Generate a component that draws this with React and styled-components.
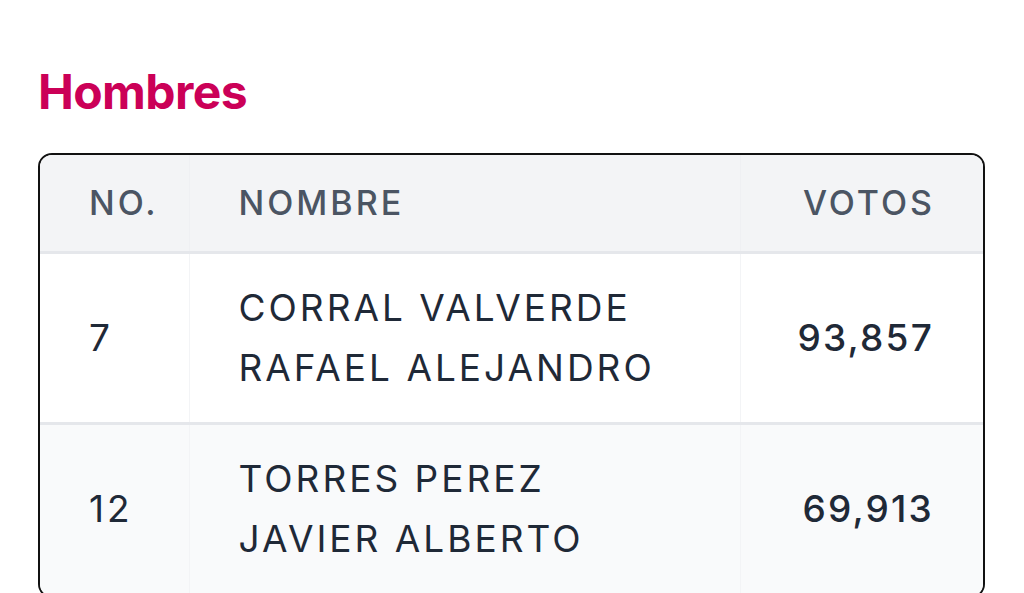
import React from "react";
import styled, { createGlobalStyle } from "styled-components";

const GlobalStyle = createGlobalStyle`
  html, body {
    margin: 0;
    padding: 0;
    background: #ffffff;
  }
  body {
    font-family: Inter, "Noto Sans", "Liberation Sans", sans-serif;
    color: #1f2937;
  }
`;

const Page = styled.div`
  padding: 63px 39px 0 38px;
`;

const Title = styled.h2`
  margin: 0 0 32px;
  font-size: 48px;
  line-height: 58px;
  font-weight: 700;
  color: #cb0057;
  letter-spacing: -0.6px;
`;

const TableWrap = styled.div`
  border: 2px solid #111111;
  border-radius: 14px;
  overflow: hidden;
`;

const Table = styled.table`
  width: 100%;
  border-collapse: collapse;
  table-layout: fixed;
`;

const Col = styled.col`
  width: ${(p) => p.w || "auto"};
`;

const HeadCell = styled.th`
  box-sizing: border-box;
  height: 97px;
  padding: 0 50px 0 49px;
  background: #f3f4f6;
  border-bottom: 3px solid #e5e7eb;
  border-right: 1px solid #eff0f3;
  font-size: 34px;
  font-weight: 500;
  letter-spacing: 3px;
  color: #4b5563;
  text-align: ${(p) => (p.right ? "right" : "left")};

  &:last-child {
    border-right: none;
    padding-right: 48px;
  }
`;

const Row = styled.tr`
  background: ${(p) => (p.odd ? "#f9fafb" : "#ffffff")};
`;

const Cell = styled.td`
  box-sizing: border-box;
  padding: 24px 50px 24px 49px;
  border-bottom: 3px solid #e5e7eb;
  border-right: 1px solid #f3f4f6;
  font-size: 37px;
  line-height: 60px;
  white-space: nowrap;
  font-weight: ${(p) => (p.strong ? 500 : 400)};
  letter-spacing: ${(p) => (p.strong ? "2.2px" : "3px")};
  text-align: ${(p) => (p.right ? "right" : "left")};
  color: #1f2937;

  &:last-child {
    border-right: none;
    padding-right: 49px;
  }
`;

const candidates = [
  { no: 7, name: ["CORRAL VALVERDE", "RAFAEL ALEJANDRO"], votes: "93,857" },
  { no: 12, name: ["TORRES PEREZ", "JAVIER ALBERTO"], votes: "69,913" },
];

export default function App() {
  return (
    <Page>
      <GlobalStyle />
      <Title>Hombres</Title>
      <TableWrap>
        <Table>
          <colgroup>
            <Col w="149px" />
            <Col />
            <Col w="243px" />
          </colgroup>
          <thead>
            <tr>
              <HeadCell>NO.</HeadCell>
              <HeadCell>NOMBRE</HeadCell>
              <HeadCell right>VOTOS</HeadCell>
            </tr>
          </thead>
          <tbody>
            {candidates.map((c, i) => (
              <Row key={c.no} odd={i % 2 === 1}>
                <Cell>{c.no}</Cell>
                <Cell>
                  {c.name[0]}
                  <br />
                  {c.name[1]}
                </Cell>
                <Cell right strong>
                  {c.votes}
                </Cell>
              </Row>
            ))}
          </tbody>
        </Table>
      </TableWrap>
    </Page>
  );
}
